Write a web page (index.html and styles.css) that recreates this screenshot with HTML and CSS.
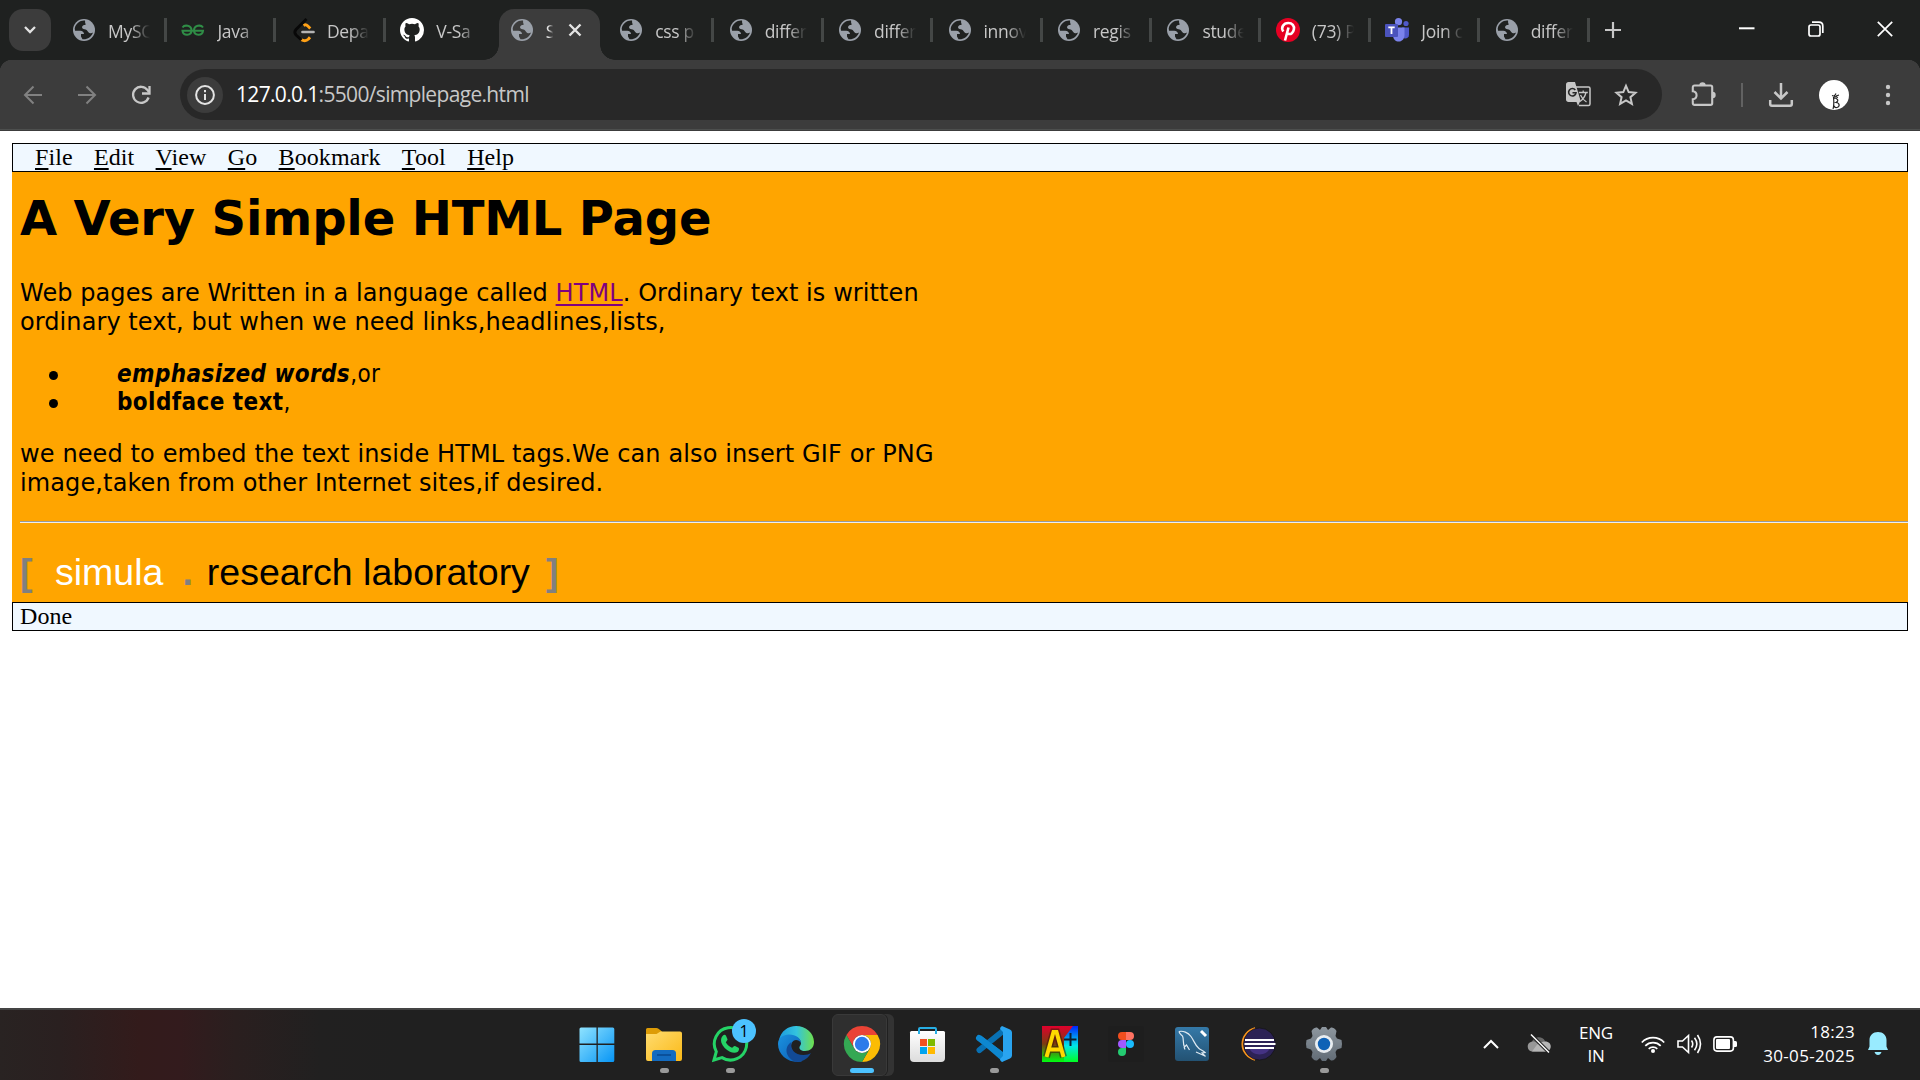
FILE: index.html
```html
<!DOCTYPE html>
<html lang="en">
<head>
<meta charset="utf-8">
<title>Simple page</title>
<link rel="stylesheet" href="styles.css">
</head>
<body>
<svg class="defs" width="0" height="0">
  <symbol id="globe" viewBox="0 0 24 24">
    <circle cx="12" cy="12" r="11" fill="#9aa0a9"/>
    <path fill="var(--tab-bg)" d="M13 2.600C8.500 2 3.500 5.500 2.700 10.500l.3 2.200h5.300c2.200 0 3.700 1.400 3.700 3.300h-3v2.600l1.500 2.600C15 21.800 19.500 19 21 14.500c-1 .8-2.500 1-3.700.4-1.300-.6-1.700-2-2.700-2.900-1.200-.9-3-.5-4-1.500-.9-.9-.6-2.600.6-3.100.9-.4 1.900 0 2.400-.8.4-.7-.5-1.300-.5-2.200 0-.7.1-1.300-.1-1.800z"/>
  </symbol>
</svg>

<header class="tabstrip">
  <button class="tab-search"><svg width="12" height="8" viewBox="0 0 12 8"><path d="M1 1l5 5 5-5" fill="none" stroke="#e3e3e3" stroke-width="2.300"/></svg></button>
  <div class="tabs">
    <div class="tab"><svg class="fav"><use href="#globe"/></svg><span class="title">MySQ</span></div>
    <div class="tab"><svg class="fav" viewBox="0 0 24 24"><path d="M1.500 9.500C3.500 6.500 10.500 7 10.500 12.500c0 5.500-8.500 5.500-9 .3H22c-.5 5.200-9 5.200-9-.3 0-5.500 7-6 9-3" fill="none" stroke="#2f8d46" stroke-width="2"/></svg><span class="title">Java</span></div>
    <div class="tab"><svg class="fav" viewBox="0 0 24 24"><path d="M12.500 7.500c1.500-1 3-.8 4.300.5l2.500 2.500M10 21.500c3 1.800 5.500 1.500 7.500-.5l1.500-1.800" fill="none" stroke="#ffa116" stroke-width="2.900"/><path d="M15.500 1L5 11.500c-1.500 1.800-1.500 3.800 0 5.500l5.500 5" fill="none" stroke="#080808" stroke-width="2.800"/><path d="M11.500 14H22.500" stroke="#b3b3b3" stroke-width="2.700" stroke-linecap="round"/></svg><span class="title">Depa</span></div>
    <div class="tab"><svg class="fav" viewBox="0 0 16 16"><path fill="#fff" d="M8 0C3.580 0 0 3.580 0 8c0 3.540 2.290 6.530 5.470 7.590.4.070.55-.17.55-.38 0-.19-.01-.82-.01-1.490-2.010.37-2.530-.49-2.690-.94-.09-.23-.48-.94-.82-1.130-.28-.15-.68-.52-.01-.53.63-.01 1.080.58 1.230.82.72 1.210 1.870.87 2.330.66.070-.52.28-.87.51-1.070-1.780-.2-3.640-.89-3.640-3.950 0-.87.31-1.590.82-2.150-.08-.2-.36-1.020.08-2.120 0 0 .67-.21 2.200.82a7.600 7.600 0 014 0c1.530-1.040 2.200-.82 2.200-.82.44 1.100.16 1.920.08 2.120.51.56.82 1.270.82 2.150 0 3.070-1.870 3.750-3.650 3.950.29.25.54.73.54 1.480 0 1.070-.01 1.930-.01 2.200 0 .21.15.46.55.38A8 8 0 0016 8c0-4.420-3.580-8-8-8z"/></svg><span class="title">V-Sa</span></div>
    <div class="tab active"><svg class="fav"><use href="#globe"/></svg><span class="title">S</span><svg class="close" width="14" height="14" viewBox="0 0 14 14"><path d="M1.500 1.500l11 11M12.500 1.500l-11 11" stroke="#e3e3e3" stroke-width="2.400"/></svg></div>
    <div class="tab"><svg class="fav"><use href="#globe"/></svg><span class="title">css p</span></div>
    <div class="tab"><svg class="fav"><use href="#globe"/></svg><span class="title">differ</span></div>
    <div class="tab"><svg class="fav"><use href="#globe"/></svg><span class="title">differ</span></div>
    <div class="tab"><svg class="fav"><use href="#globe"/></svg><span class="title">innov</span></div>
    <div class="tab"><svg class="fav"><use href="#globe"/></svg><span class="title">regis</span></div>
    <div class="tab"><svg class="fav"><use href="#globe"/></svg><span class="title">stude</span></div>
    <div class="tab"><svg class="fav" viewBox="0 0 24 24"><circle cx="12" cy="12" r="12" fill="#e60023"/><path d="M7.300 13.500C4.500 9.500 7.500 5 12.300 5c4 0 6.200 3 5.600 6.300-.6 3.500-3.200 5.200-5.200 4.600-1-.3-1.600-1-1.700-1.600M12.500 9.500L9 22.500" fill="none" stroke="#fff" stroke-width="2.600"/></svg><span class="title">(73) P</span></div>
    <div class="tab"><svg class="fav" viewBox="0 0 24 24"><circle cx="21" cy="5.500" r="2.600" fill="#5059c9"/><path d="M17 9.500h7v7c0 4-4 5-7 3z" fill="#5059c9"/><circle cx="13.500" cy="3.700" r="3.600" fill="#7b83eb"/><path d="M8 9.500h11.500V17c0 8.500-11.500 9-11.500 0z" fill="#7b83eb"/><rect x="0" y="6" width="13" height="13" rx="1" fill="#4b53bc"/><path d="M3.300 9.300h6.400M6.500 9.300V16" stroke="#fff" stroke-width="1.800"/></svg><span class="title">Join c</span></div>
    <div class="tab"><svg class="fav"><use href="#globe"/></svg><span class="title">differ</span></div>
  </div>
  <button class="newtab"><svg width="16" height="16" viewBox="0 0 16 16"><path d="M8 0v16M0 8h16" stroke="#c7c7c7" stroke-width="2.200"/></svg></button>
  <div class="winctl">
    <svg width="16" height="16" viewBox="0 0 16 16"><path d="M0 7.300h15.500" stroke="#fff" stroke-width="2"/></svg>
    <svg width="16" height="16" viewBox="0 0 16 16"><rect x="1" y="4" width="11" height="11" rx="2" fill="none" stroke="#fff" stroke-width="1.700"/><path d="M4 1.200h7c2.200 0 3.800 1.600 3.800 3.800v7" fill="none" stroke="#fff" stroke-width="1.700"/></svg>
    <svg width="16" height="16" viewBox="0 0 16 16"><path d="M.8.8l14.400 14.400M15.200.8L.8 15.200" stroke="#fff" stroke-width="1.700"/></svg>
  </div>
</header>

<nav class="toolbar">
  <svg class="nav-ico" viewBox="0 0 20 20"><path d="M19 10H2.500M10.500 1.500L2 10l8.500 8.500" fill="none" stroke="#818181" stroke-width="2"/></svg>
  <svg class="nav-ico" viewBox="0 0 20 20"><path d="M1 10h16.500M9.500 1.500L18 10l-8.500 8.500" fill="none" stroke="#818181" stroke-width="2"/></svg>
  <svg class="nav-ico" viewBox="0 0 20 20"><path d="M17.600 12.500A8 8 0 1 1 16.500 5l1.500 2" fill="none" stroke="#c7c7c7" stroke-width="2.300"/><path d="M18.500 1v7.500H11" fill="none" stroke="#c7c7c7" stroke-width="2.300"/></svg>
  <div class="omnibox">
    <span class="info"><svg width="20" height="20" viewBox="0 0 20 20"><circle cx="10" cy="10" r="8.900" fill="none" stroke="#e3e3e3" stroke-width="2"/><path d="M10 9v6M10 5v2.200" stroke="#e3e3e3" stroke-width="2"/></svg></span>
    <span class="url"><b>127.0.0.1</b>:5500/simplepage.html</span>
    <svg class="translate" width="25" height="25" viewBox="0 0 25 25"><path d="M10 5h12.500c.9 0 1.500.6 1.500 1.500V22c0 .9-.6 1.500-1.500 1.500H13" fill="none" stroke="#c7c7c7" stroke-width="1.500"/><path d="M2.500 0H9l5.500 18.500L12 24l-1.500-4H2.500C1 20 0 19 0 17.500v-15C0 1 1 0 2.500 0z" fill="#c7c7c7"/><path d="M9.300 8A3.700 3.700 0 1 0 10 10.800H6.500" fill="none" stroke="#282828" stroke-width="1.600"/><path d="M12.800 10.500h9M17.200 8.500v2M20 10.500c-1 4-3 7-6 9M14.500 13c1 2.500 3.500 5.500 6 7" fill="none" stroke="#c7c7c7" stroke-width="1.300"/></svg>
    <svg class="star" width="24" height="24" viewBox="0 0 24 24"><path d="M12 2.800l2.700 6.300 6.800.6-5.100 4.500 1.500 6.700-5.900-3.600-5.900 3.600 1.500-6.700-5.100-4.500 6.800-.6z" fill="none" stroke="#c7c7c7" stroke-width="2"/></svg>
  </div>
  <svg class="ext" width="26" height="26" viewBox="0 0 26 26"><path d="M3.500 4.500h16c1 0 1.700.7 1.700 1.700v16c0 1-.7 1.700-1.700 1.700h-16c-1 0-1.700-.7-1.700-1.700v-4c5-.5 5-7.500 0-8v-4c0-1 .7-1.700 1.700-1.700z" fill="none" stroke="#c7c7c7" stroke-width="2.100"/><path d="M8.300 4.500a3.200 3.200 0 0 1 6.400 0zM21.500 10.800a3.200 3.200 0 0 1 0 6.400z" fill="#c7c7c7"/></svg>
  <i class="vsep"></i>
  <svg class="dl" width="24" height="24" viewBox="0 0 24 24"><path d="M12 0v15M5.500 9l6.500 6.500L18.500 9M1.200 17v4c0 1 .7 1.700 1.700 1.700h18.200c1 0 1.700-.7 1.700-1.700v-4" fill="none" stroke="#c7c7c7" stroke-width="2.500"/></svg>
  <svg class="avatar" width="30" height="30" viewBox="0 0 30 30"><circle cx="15" cy="15" r="15" fill="#fff"/><path d="M14 29c1-3 1-7 .5-12M14.500 17.500c4 1 6 3 2.500 5 4 .5 4 4 1 5-2 .5-3-.5-2-1.500M13 15.500l6 2M14.500 17.500l2.500-4M17 16l3-1" fill="none" stroke="#222" stroke-width="1.200"/></svg>
  <svg class="kebab" width="6" height="24" viewBox="0 0 6 24"><g fill="#c7c7c7"><circle cx="3" cy="4" r="2.200"/><circle cx="3" cy="12" r="2.200"/><circle cx="3" cy="20" r="2.200"/></g></svg>
</nav>

<main class="page">
  <div class="menubar"><span><u>F</u>ile</span><span><u>E</u>dit</span><span><u>V</u>iew</span><span><u>G</u>o</span><span><u>B</u>ookmark</span><span><u>T</u>ool</span><span><u>H</u>elp</span></div>
  <section class="content">
    <h1>A Very Simple HTML Page</h1>
    <p class="p1">Web pages are Written in a language called <a href="#">HTML</a>. Ordinary text is written<br>ordinary text, but when we need links,headlines,lists,</p>
    <ul>
      <li><b class="em">emphasized words</b>,or</li>
      <li><b>boldface text</b>,</li>
    </ul>
    <p class="p2">we need to embed the text inside HTML tags.We can also insert GIF or PNG<br>image,taken from other Internet sites,if desired.</p>
    <hr>
    <div class="lab"><b class="g b1">[</b><span class="w">simula</span><b class="g b2">.</b><span class="r">research laboratory</span><b class="g b3">]</b></div>
  </section>
  <div class="status">Done</div>
</main>

<footer class="taskbar">
  <div class="apps">
    <div class="app"><svg viewBox="0 0 36 36"><defs><linearGradient id="w" x2="1" y2="1"><stop stop-color="#8fe3ff"/><stop offset="1" stop-color="#0795f5"/></linearGradient></defs><path fill="url(#w)" d="M1 1.500h15.500v16H-.5V3q0-1.500 1.500-1.500zM17.800 1.500h15q1.500 0 1.500 1.500v14.500H17.800zM-.5 19h17v17H1q-1.500 0-1.500-1.500zM17.800 19h16.500v15.500q0 1.500-1.500 1.500h-15z"/></svg></div>
    <div class="app run"><svg viewBox="0 0 36 36"><defs><linearGradient id="fo" x2="1" y2="1"><stop stop-color="#ffdc70"/><stop offset="1" stop-color="#fbb917"/></linearGradient></defs><path fill="#dd9c07" d="M0 3.500Q0 2 1.500 2h9q1 0 2 .8L16 5.500 10 12H0z"/><path fill="url(#fo)" d="M0 8h10.500l4-2.500H34q2 0 2 2V33q0 2-2 2H2q-2 0-2-2z"/><path fill="#136bc0" d="M6 35v-7.500q0-3.500 3.500-3.500h17q3.500 0 3.500 3.500V35z"/><path d="M11 29h14" stroke="#0a4a92" stroke-width="1.600"/></svg></div>
    <div class="app run"><svg viewBox="0 0 36 36"><path d="M2 34l2.300-8.400A16.200 16.200 0 1 1 10 31.600z" fill="none" stroke="#25d366" stroke-width="3"/><path d="M11 9.500c1-1 2.500-.8 3 .3l1.500 3.400c.3 1-1.400 2.300-1.700 3 1.200 2.500 3.500 4.500 6.200 5.600.8-.4 2-2.200 3-1.800l3.500 1.700c1 .6.500 3-.6 4-2 1.600-5 1.500-8 0-4-2-7-5-8.500-9-.8-2.500-.3-5.300 1.600-7.200z" fill="#25d366"/></svg><span class="badge">1</span></div>
    <div class="app"><svg viewBox="0 0 36 36"><defs><linearGradient id="e1" x2="1"><stop stop-color="#1d9bde"/><stop offset=".5" stop-color="#33c3df"/><stop offset="1" stop-color="#6fe04c"/></linearGradient><linearGradient id="e2" x2="1" y2="1"><stop stop-color="#1b93df"/><stop offset="1" stop-color="#0b5cb5"/></linearGradient></defs><path fill="url(#e1)" d="M1 14C3 5 10 0 18 0c10 0 18 7 18 16 0 6-4 9-9 9-4 0-6-2-5.500-4 .5-1.500 1.500-2 1.500-4 0-3-3-6-7-6H6z"/><path fill="url(#e2)" d="M0 18C0 12 5 8.500 11 8.500c7 0 12 4 12 8.500-1-2-3-3-5-3-3 0-5 3-5 7 0 7 6 11 11 14.500C12 38 0 30 0 18z"/><path fill="#124a95" d="M13.500 16c-1.500 7 3 13 12 13 3 0 6-1 7.500-2-3 6-9 9-15 9-6-2-10-7-9.500-12.500.3-3.500 2.500-6 5-7.500z"/></svg></div>
    <div class="app current"><svg viewBox="0 0 36 36"><path fill="#ea4335" d="M2.400 9A18 18 0 0 1 33.600 9H18a9 9 0 0 0-7.800 13.500z"/><path fill="#fbbc04" d="M33.600 9A18 18 0 0 1 18 36l7.800-13.500A9 9 0 0 0 18 9z"/><path fill="#34a853" d="M18 36A18 18 0 0 1 2.400 9l7.800 13.500a9 9 0 0 0 15.600 0z"/><circle cx="18" cy="18" r="9" fill="#fff"/><circle cx="18" cy="18" r="7.200" fill="#2d7bea"/></svg></div>
    <div class="app"><svg viewBox="0 0 36 36"><defs><linearGradient id="st" x2="0" y2="1"><stop stop-color="#fff"/><stop offset="1" stop-color="#dcdcdc"/></linearGradient></defs><path fill="url(#st)" d="M0 6.500Q0 5 1.500 5h32q1.500 0 1.500 1.500V32q0 4-4 4h-27q-4 0-4-4z"/><path d="M9 8V3q0-1 1-1h15q1 0 1 1v5" fill="none" stroke="#27aee4" stroke-width="2"/><path fill="#f25022" d="M10 13h7v7h-7z"/><path fill="#7fba00" d="M18 13h7v7h-7z"/><path fill="#00a4ef" d="M10 21h7v7h-7z"/><path fill="#ffb900" d="M18 21h7v7h-7z"/></svg></div>
    <div class="app run"><svg viewBox="0 0 36 36"><path d="M3 12L27 30" stroke="#0d87d0" stroke-width="6" stroke-linecap="round"/><path d="M3.500 24L27 5" stroke="#0870b3" stroke-width="6" stroke-linecap="round"/><path fill="#0d87d0" d="M1 13.500l4-4L28 27l-1 9z"/><path fill="#29a4f0" d="M26 0l8 3.500q2 1 2 3v23q0 2-2 3L26 36q-2-1-2-3l3-3V6l-3-3q0-2 2-3z"/></svg></div>
    <div class="app"><svg viewBox="0 0 36 36"><defs><linearGradient id="a1" x2="0" y2="1"><stop stop-color="#e0002c"/><stop offset=".5" stop-color="#7a3c10"/><stop offset="1" stop-color="#0f1"/></linearGradient><linearGradient id="a2" x2="0" y2="1"><stop stop-color="#0024ff"/><stop offset=".55" stop-color="#00e8e8"/><stop offset="1" stop-color="#0f2"/></linearGradient></defs><path fill="url(#a1)" d="M0 0h36v36H0z"/><path fill="url(#a2)" d="M31 0h5v36H22V12z"/><path d="M4.500 31L11.500 6h3l7 25M7.500 23.500h11" fill="none" stroke="#3a1604" stroke-width="7" opacity=".55"/><path d="M4.500 31L11.500 6h3l7 25M7.500 23.500h11" fill="none" stroke="#ffd800" stroke-width="4"/><path d="M28.500 7v13M22 13.500h12.500" stroke="#0b2030" stroke-width="2"/></svg></div>
    <div class="app"><svg viewBox="0 0 36 36"><rect width="36" height="36" rx="3" fill="#1e1e1e"/><path fill="#f24e1e" d="M18 6h-4a4 4 0 0 0 0 8h4z"/><path fill="#ff7262" d="M18 6h4a4 4 0 0 1 0 8h-4z"/><path fill="#a259ff" d="M18 14h-4a4 4 0 0 0 0 8h4z"/><circle cx="22" cy="18" r="4" fill="#1abcfe"/><path fill="#24cb71" d="M18 22h-4a4 4 0 1 0 4 4z"/></svg></div>
    <div class="app"><svg viewBox="0 0 36 36"><defs><linearGradient id="m" x2="0" y2="1"><stop stop-color="#3479a8"/><stop offset="1" stop-color="#235273"/></linearGradient></defs><rect x="1" y="1" width="34" height="34" rx="3" fill="url(#m)"/><path d="M5 5.500c4-1 9 1 12 5s4 9 8 12c2 1.500 4 2 6 4l-3 .5 3.500 3.500M5 5.500c0 2 2 3 3.500 4.500C10 13 8.500 17 10.500 21l2-2 3 5M10 21l1 2.500M22 26l9 4" fill="none" stroke="#dfeaf2" stroke-width="1.200"/><path d="M27 5l5 5" stroke="#fff" stroke-width="3"/></svg></div>
    <div class="app"><svg viewBox="0 0 36 36"><path d="M15 2A17 16.500 0 0 0 15 34C4 29 4 7 15 2z" fill="#f7941e" stroke="#f7941e" stroke-width="1.400"/><circle cx="19.500" cy="18" r="16" fill="#2c2255" stroke="#111" stroke-width=".7"/><path fill="#443283" d="M9 22h21q-3 6.500-10.500 6.500T9 22z"/><path d="M5 14h29M4.500 18h31M5 22h29" stroke="#fff" stroke-width="2"/></svg></div>
    <div class="app run"><svg viewBox="0 0 36 36"><defs><linearGradient id="s" x2="0" y2="1"><stop stop-color="#8e979f"/><stop offset="1" stop-color="#626c76"/></linearGradient></defs><path fill="url(#s)" d="M7 3q2-2 4-1.500l3 2.500 2-3h4l2 3 3-2.500Q27 1 29 3l1.500 2-1 5 1.500 2.500 4.500 1.500q1 4 0 8L31 23.500 29.500 26l1 5-1.500 2q-2 2-4 1.500L22 32l-2 3h-4l-2-3-3 2.500Q9 35 7 33l-1.500-2 1-5L5 23.500.5 22q-1-4 0-8L5 12.500 6.500 10l-1-5z"/><circle cx="18" cy="18" r="9" fill="#e9edf0"/><circle cx="18" cy="18" r="6.200" fill="#0f62b6"/></svg></div>
  </div>
  <div class="tray">
    <svg class="chev" width="16" height="10" viewBox="0 0 16 10"><path d="M1 9l7-7 7 7" fill="none" stroke="#fff" stroke-width="2"/></svg>
    <svg class="cloud" width="26" height="20" viewBox="0 0 26 20"><path d="M6 8a7 6.500 0 0 1 13-1l2 4H5z" fill="#686868"/><path d="M6 17.500a5 5 0 0 1-.5-9.800c2-.5 4 0 5.500 1.300L20 17.500z" fill="#979797"/><path d="M10 12c3-4 7-4 9-4.500 8 0 7 10 1 10H6z" fill="#b5b5b5"/><path d="M4.500 0l18 18" stroke="#202020" stroke-width="3.500"/><path d="M5 .5l18 18" stroke="#fff" stroke-width="1.500"/></svg>
    <div class="lang">ENG<br>IN</div>
    <svg class="wifi" width="24" height="18" viewBox="0 0 24 18"><g fill="none" stroke="#fff" stroke-width="1.700"><path d="M.8 7.500a15.500 15.500 0 0 1 22.400 0M4.300 10.800a10.800 10.800 0 0 1 15.400 0M7.700 13.800a6.200 6.200 0 0 1 8.600 0"/></g><circle cx="12" cy="16" r="2" fill="#fff"/></svg>
    <svg class="vol" width="24" height="20" viewBox="0 0 24 20"><path d="M1 7h4.500l6-5.500v17L5.500 13H1zM14.500 6.500q2.500 3.500 0 7M17.500 3.800q4.700 6.200 0 12.400M20.500 1q6 9 0 18" fill="none" stroke="#fff" stroke-width="1.600"/></svg>
    <svg class="bat" width="24" height="16" viewBox="0 0 24 16"><rect x=".9" y=".9" width="19.500" height="14.200" rx="3" fill="none" stroke="#fff" stroke-width="1.600"/><rect x="3" y="3" width="14" height="10" rx="1" fill="#fff"/><path d="M21 5h1.500q1.500 0 1.500 1.500v3q0 1.500-1.500 1.500H21z" fill="#fff"/></svg>
    <div class="clock">18:23<br>30-05-2025</div>
    <svg class="bell" width="20" height="24" viewBox="0 0 20 24"><path d="M10 0c5 0 8.500 3.500 8.500 8v6.500L20 18H0l1.500-3.500V8C1.500 3.500 5 0 10 0zM6.500 20h7q-1 3-3.500 3t-3.500-3z" fill="#99ebff"/></svg>
  </div>
</footer>
</body>
</html>
```
FILE: styles.css
```css
* { box-sizing: border-box; }
body {
  margin: 0;
  width: 1920px;
  height: 1080px;
  display: flex;
  flex-direction: column;
  overflow: hidden;
  background: #fff;
  font-family: "Open Sans", "Noto Sans", sans-serif;
  color: #000;
}
svg { display: block; flex: none; overflow: visible; }
.defs { position: absolute; }
button { border: 0; padding: 0; background: none; }

/* tab strip */
.tabstrip {
  --tab-bg: #1f2120;
  height: 60px;
  flex: none;
  display: flex;
  background: #1f2120;
}
.tab-search {
  width: 42px;
  height: 42px;
  margin: 9px 7px 0 9px;
  border-radius: 14px;
  background: #3c3c3c;
  display: flex;
  align-items: center;
  justify-content: center;
  flex: none;
}
.tabs { display: flex; flex: none; }
.tab {
  width: 109.450px;
  height: 60px;
  display: flex;
  padding: 18px 0 0 14px;
  flex: none;
  background: linear-gradient(#444746, #444746) 106px 18px / 3px 24px no-repeat;
}
.tab:has(+ .active) { background: none; }
.fav { width: 24px; height: 24px; }
use { width: 24px; height: 24px; }
.title {
  width: 42px;
  margin-left: 12px;
  white-space: nowrap;
  font-size: 17.500px;
  line-height: 27px;
  letter-spacing: -0.300px;
  color: #c7c7c7;
  -webkit-mask-image: linear-gradient(90deg, #000 55%, transparent);
  mask-image: linear-gradient(90deg, #000 55%, transparent);
}
.active {
  --tab-bg: #3c3c3c;
  background: none;
  position: relative;
  z-index: 0;
}
.active::before {
  content: "";
  position: absolute;
  z-index: -1;
  left: 3px;
  top: 9px;
  width: 101px;
  height: 51px;
  border-radius: 15px 15px 0 0;
  background: #3c3c3c;
}
.active::after {
  content: "";
  position: absolute;
  z-index: -1;
  left: -12px;
  top: 45px;
  width: 131px;
  height: 15px;
  background:
    radial-gradient(circle at 0 0, transparent 14.500px, #3c3c3c 15px) 0 0 / 15px 15px no-repeat,
    radial-gradient(circle at 100% 0, transparent 14.500px, #3c3c3c 15px) 100% 0 / 15px 15px no-repeat;
}
.active .title {
  width: 9px;
  color: #e3e3e3;
  -webkit-mask-image: linear-gradient(90deg, #000 30%, transparent 80%);
  mask-image: linear-gradient(90deg, #000 30%, transparent 80%);
}
.close { margin: 5px 0 0 13px; }
.newtab { width: 16px; margin: 22px 0 0 15px; align-self: flex-start; }
.winctl { margin: 21px 27px 0 auto; display: flex; gap: 53px; }

/* toolbar */
.toolbar {
  height: 71px;
  flex: none;
  display: flex;
  align-items: center;
  background:
    linear-gradient(#4d4f4e, #4d4f4e) 0 69px / 100% 1px no-repeat,
    radial-gradient(circle at 12px 12px, #3c3c3c 12px, #1f2120 12.500px) 0 0 / 12px 12px no-repeat,
    radial-gradient(circle at 0 12px, #3c3c3c 12px, #1f2120 12.500px) 100% 0 / 12px 12px no-repeat,
    #3c3c3c;
}
.nav-ico { width: 20px; height: 20px; margin: 0 0 1px 23px; }
.nav-ico + .nav-ico { margin-left: 34px; }
.omnibox {
  width: 1482px;
  height: 51px;
  margin: 0 0 2px 29px;
  padding: 0 24px 0 7px;
  border-radius: 26px;
  background: #282828;
  display: flex;
  align-items: center;
  flex: none;
}
.info {
  width: 36px;
  height: 36px;
  border-radius: 50%;
  background: #3c3c3c;
  display: flex;
  align-items: center;
  justify-content: center;
}
.url { margin: 0 0 2px 13px; font-size: 21px; letter-spacing: -0.670px; color: #c7c7c7; line-height: 30px; }
.url b { font-weight: 400; color: #fff; }
.translate { margin-left: auto; }
.star { margin-left: 23px; }
.ext { margin: 0 0 4px 29px; }
.vsep { width: 2px; height: 24px; margin: 0 0 2px 24px; background: #626262; }
.dl { margin: 0 0 1px 26px; }
.avatar { margin: 0 0 1px 26px; }
.kebab { margin: 0 0 1px 36px; }

/* document */
.page { flex: 1; padding: 12px; display: flex; flex-direction: column; }
.menubar, .status {
  height: 29px;
  border: 1px solid #000;
  background: #f0f8ff;
  font: 24px/27px "Liberation Serif", serif;
  letter-spacing: 0.080px;
}
.menubar { padding-left: 22px; display: flex; gap: 21.300px; }
.menubar u { text-underline-offset: 3px; text-decoration-thickness: 2px; }
.status { padding-left: 7px; }
.content {
  height: 430px;
  padding-left: 8px;
  background: #ffa500;
  font-family: "DejaVu Sans", sans-serif;
}
h1 { margin: 0; padding-top: 17px; font-size: 48px; line-height: 58px; letter-spacing: -0.150px; }
p { margin: 0; font-size: 24px; line-height: 29px; white-space: nowrap; }
.p1 { margin-top: 32px; letter-spacing: 0.080px; }
a { color: #800080; text-underline-offset: 3px; text-decoration-thickness: 2px; }
ul {
  margin: 23px 0 0;
  padding: 0 0 0 97px;
  list-style: none;
  font: 24px/28px "DejaVu Sans Condensed", "DejaVu Sans", sans-serif;
  letter-spacing: 0.400px;
}
li { display: flex; align-items: center; }
li::before { content: ""; width: 9px; height: 9px; border-radius: 50%; background: #000; margin: 2px 59px 0 -68px; }
.em { font-style: italic; }
.p2 { margin-top: 24px; letter-spacing: 0.120px; }
hr { margin: 23px 0 0; border: 0; height: 2px; background: linear-gradient(#9a9a9a 50%, #eee 50%); }
.lab { margin-top: 28px; display: flex; font: 37.500px/42px "Liberation Sans", sans-serif; white-space: nowrap; }
.g { color: #808080; }
.b1 { width: 10px; }
.w { color: #fff; margin-left: 25px; }
.b2 { margin: 0 14px 0 19px; }
.r { margin-right: 16px; }

/* taskbar */
.taskbar {
  height: 72px;
  flex: none;
  display: flex;
  border-top: 2px solid #444;
  padding-left: 563px;
  background: linear-gradient(90deg, #292322 0, #2a2020 60px, #331b1b 140px, #331b1d 180px, #2a1f1f 235px, #212020 320px, #202020 400px);
  color: #fff;
}
.apps { display: flex; }
.app { width: 66px; height: 70px; padding: 16px 0 0 17px; position: relative; flex: none; }
.app svg { width: 36px; height: 36px; position: relative; }
.run::after, .current::after {
  content: "";
  position: absolute;
  left: 31px;
  top: 58px;
  width: 9px;
  height: 5px;
  border-radius: 3px;
  background: #9a9a9a;
}
.current::after { left: 23px; width: 24px; background: #4cc2ff; }
.current::before {
  content: "";
  position: absolute;
  left: 5px;
  top: 4px;
  width: 53px;
  height: 60px;
  border-radius: 6px;
  background: #2f2f2f;
  border: 1px solid #393939;
  box-shadow: 1px 0 #202020, 7px 0 #333;
}
.badge {
  position: absolute;
  left: 37px;
  top: 9px;
  width: 24px;
  height: 24px;
  border-radius: 50%;
  background: #4cc2ff;
  color: #000;
  font-size: 16px;
  line-height: 24px;
  text-align: center;
}
.tray {
  margin-left: auto;
  padding-right: 32px;
  display: flex;
  align-items: center;
  font-size: 17px;
  line-height: 23px;
}
.tray > * { margin-bottom: 2px; }
.cloud { margin-left: 27px; }
.lang { margin: 0 0 2px 26px; width: 36px; text-align: center; letter-spacing: -0.200px; }
.wifi { margin-left: 27px; }
.vol { margin-left: 12px; }
.bat { margin-left: 12px; }
.clock { margin-left: 22px; width: 96px; text-align: right; line-height: 24px; letter-spacing: 0.300px; }
.bell { margin-left: 13px; }
```
